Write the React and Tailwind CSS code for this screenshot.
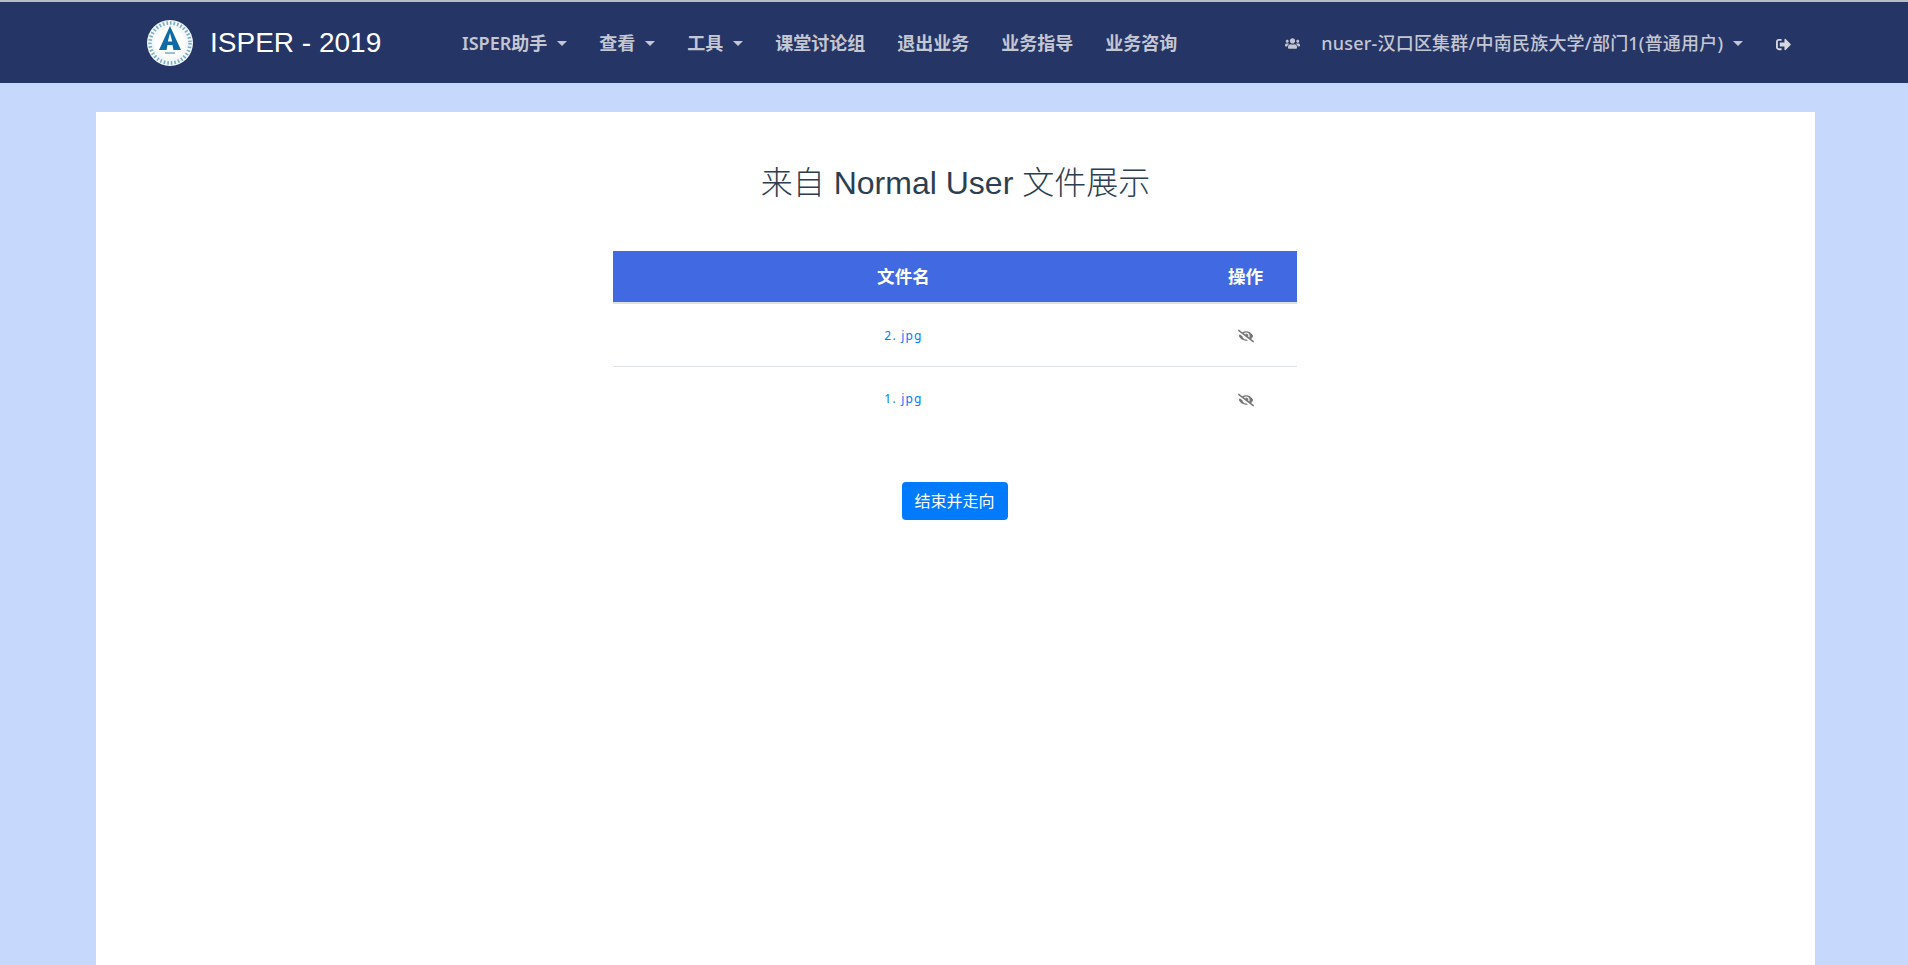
import React from "react";
import { FaUsers, FaSignOutAlt, FaEyeSlash } from "react-icons/fa";

const cjk = "font-['Noto_Sans','Noto_Sans_CJK_SC',sans-serif]";

function Logo() {
  return (
    <svg width="46" height="46" viewBox="0 0 46 46" className="shrink-0">
      <circle cx="23" cy="23" r="23" fill="#f4f8fa" />
      <circle cx="23" cy="23" r="20" fill="none" stroke="#5d9abc" strokeWidth="3.6" strokeDasharray="1.6 2" opacity="0.8" />
      <circle cx="23" cy="23" r="15.5" fill="#ffffff" />
      <path d="M23 6 L34 30 L26.5 30 L25.5 25 L20.5 25 L19.5 30 L12 30 L23 6 Z" fill="#0f6ba6" />
      <path d="M23 13 L25.2 21.5 L20.8 21.5 Z" fill="#ffffff" />
      <rect x="21.8" y="25" width="2.4" height="5" fill="#ffffff" />
      <path d="M18 33 H28" stroke="#7fb0cc" strokeWidth="1.6" />
    </svg>
  );
}

function Caret() {
  return <span className="ml-[10px] inline-block h-0 w-0 border-x-[5px] border-t-[5px] border-x-transparent border-t-current" />;
}

function NavItem({ children, caret, className = "font-semibold" }) {
  return (
    <a className={`flex items-center whitespace-nowrap text-[18px] text-[#c4c7d2] ${className}`}>
      {children}
      {caret && <Caret />}
    </a>
  );
}

function Row({ name, last }) {
  return (
    <tr className={last ? "h-[64px]" : "h-[63px] border-b border-[#dee2e6]"}>
      <td className="text-center align-middle text-[12px] tracking-[1.2px] text-[#007bff]">
        <a className="relative top-[1px]">{name}</a>
      </td>
      <td className="text-center align-middle">
        <FaEyeSlash className="inline-block text-[16px] text-[#777777]" />
      </td>
    </tr>
  );
}

export default function App() {
  return (
    <div className={`flex min-h-[965px] flex-col bg-[#c6d9fd] ${cjk}`}>
      <header className="flex h-[83px] shrink-0 items-center border-t-2 border-t-[#b9bcc2] bg-[#253566] pl-[147px]">
        <Logo />
        <span className="ml-[17px] w-[252px] whitespace-nowrap font-['Liberation_Sans','Noto_Sans_CJK_SC',sans-serif] text-[28px] text-white">
          ISPER - 2019
        </span>
        <nav className="flex items-center gap-[32px] pt-[2px]">
          <NavItem caret>ISPER助手</NavItem>
          <NavItem caret>查看</NavItem>
          <NavItem caret>工具</NavItem>
          <NavItem>课堂讨论组</NavItem>
          <NavItem>退出业务</NavItem>
          <NavItem>业务指导</NavItem>
          <NavItem>业务咨询</NavItem>
        </nav>
        <div className="ml-[108px] flex items-center pt-[2px]">
          <FaUsers className="text-[15px] text-[#c4c7d2]" />
          <NavItem caret className="ml-[21px] font-medium tracking-[0.2px]">nuser-汉口区集群/中南民族大学/部门1(普通用户)</NavItem>
          <FaSignOutAlt className="ml-[33px] mt-[2px] text-[15px] text-[#d5d7de]" />
        </div>
      </header>
      <main className="ml-[96px] mr-[93px] mt-[29px] flex flex-1 flex-col items-center bg-white pr-[2px] pt-[48px]">
        <h1 className="pl-[2px] font-['Liberation_Sans','Noto_Sans_CJK_SC',sans-serif] text-[32px] font-light leading-[46px] text-[#2c3e50]">
          来自 Normal User 文件展示
        </h1>
        <table className="mt-[45px] w-[684px] table-fixed border-collapse">
          <thead>
            <tr className="h-[52px] border-b-2 border-[#dee2e6] bg-[#4169e1] text-[17.6px] font-bold text-white">
              <th className="text-center">文件名</th>
              <th className="w-[102px] text-center">操作</th>
            </tr>
          </thead>
          <tbody>
            <Row name="2. jpg" />
            <Row name="1. jpg" last />
          </tbody>
        </table>
        <button className="mt-[52px] h-[38px] w-[106px] rounded-[4px] bg-[#007bff] text-center text-[16px] text-white">
          结束并走向
        </button>
      </main>
    </div>
  );
}
